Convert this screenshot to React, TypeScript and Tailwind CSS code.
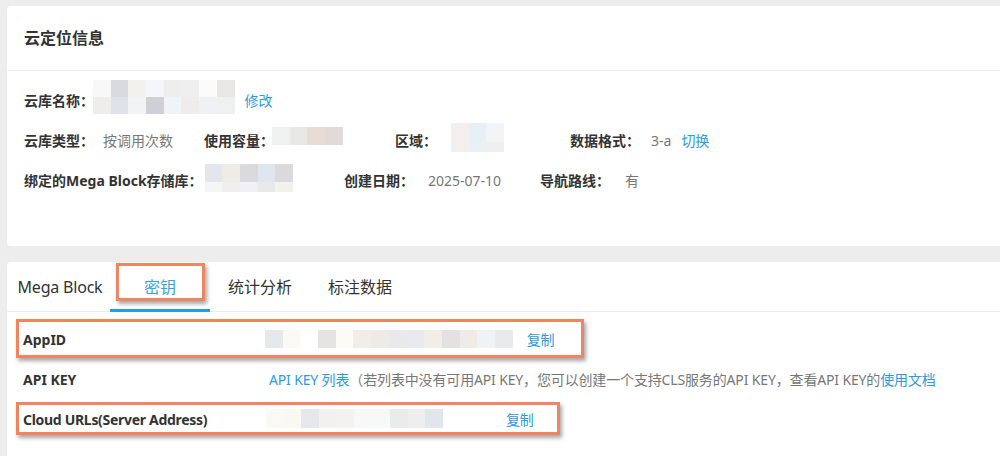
const FONT = { fontFamily: '"Noto Sans", "Noto Sans CJK SC", sans-serif' };

// blurred placeholder blocks (mosaic) standing in for hidden values
const Mosaic = ({ rows, className = '' }: { rows: { h: number; cells: string[] }[]; className?: string }) => (
  <div className={`flex flex-col shrink-0 ${className}`}>
    {rows.map((r, i) => (
      <div key={i} className="flex" style={{ height: r.h }}>
        {r.cells.map((c, j) => (
          <div key={j} className="w-[17.7px] h-full" style={{ background: c }} />
        ))}
      </div>
    ))}
  </div>
);

const Label = ({ children, className = '' }: { children: React.ReactNode; className?: string }) => (
  <span className={`text-[14px] font-bold text-[#333] whitespace-nowrap ${className}`}>{children}</span>
);

const Value = ({ children, className = '' }: { children: React.ReactNode; className?: string }) => (
  <span className={`text-[14px] text-[#777] whitespace-nowrap ${className}`}>{children}</span>
);

const Link = ({ children, className = '' }: { children: React.ReactNode; className?: string }) => (
  <span className={`text-[14px] text-[#2b9ae3] whitespace-nowrap cursor-pointer ${className}`}>{children}</span>
);

const Annot = ({ className }: { className: string }) => (
  <div className={`absolute border-[3px] border-[#f2855f] shadow-[2px_3px_4px_rgba(0,0,0,0.35)] pointer-events-none ${className}`} />
);

export default function App() {
  const tabs = ['Mega Block', '密钥', '统计分析', '标注数据'];
  const active = 1;

  return (
    <div className="w-[1000px] h-[456px] overflow-hidden bg-[#ededed] pl-[7px] pt-[6px]" style={FONT}>
      {/* 云定位信息 */}
      <div className="bg-white rounded-l-[4px] h-[240px]">
        <div className="h-[65px] flex items-center pl-[17px] border-b border-[#ececec]">
          <span className="text-[16px] font-bold text-[#333]">云定位信息</span>
        </div>
        <div className="pl-[17px] pt-[9px]">
          <div className="flex h-[40px] items-center">
            <Label>云库名称：</Label>
            <Mosaic
              className="self-start -ml-px"
              rows={[
                { h: 17, cells: ['#f8f8f9', '#d9dadf', '#f2f1ee', '#f4f7fa', '#eeeeed', '#efefef', '#fcfbf8', '#e8e7e6'] },
                { h: 17, cells: ['#efedeb', '#dfe2e8', '#f2f3f5', '#cfd0d5', '#eef4f7', '#efeceb', '#eef2f5', '#eff0f0'] },
              ]}
            />
            <Link className="ml-[10px]">修改</Link>
          </div>
          <div className="flex h-[40px] items-center">
            <div className="w-[180px] flex items-center">
              <Label>云库类型：</Label>
              <Value className="ml-[9px]">按调用次数</Value>
            </div>
            <div className="w-[191px] flex items-center">
              <Label>使用容量：</Label>
              <Mosaic className="-mt-[9px] -ml-[2px]" rows={[{ h: 18, cells: ['#eff1f0', '#e8e8e4', '#e8ddd3', '#e0dbd9'] }]} />
            </div>
            <div className="w-[175px] flex items-center">
              <Label>区域：</Label>
              <Mosaic
                className="ml-[14px] -mt-[5px]"
                rows={[
                  { h: 19, cells: ['#f4efed', '#e6f1f5', '#f1f5f8'] },
                  { h: 10, cells: ['#f3efed', '#e9f1f2', '#efefef'] },
                ]}
              />
            </div>
            <div className="flex items-center">
              <Label>数据格式：</Label>
              <Value className="ml-[11px]">3-a</Value>
              <Link className="ml-[10px]">切换</Link>
            </div>
          </div>
          <div className="flex h-[40px] items-center">
            <div className="w-[320px] flex items-center">
              <Label>绑定的Mega Block存储库：</Label>
              <Mosaic
                className="ml-[2px] -mt-[4px]"
                rows={[
                  { h: 18, cells: ['#e3e6ea', '#efece7', '#dadadd', '#e0e6ee', '#dadadb'] },
                  { h: 10, cells: ['#f4f5f5', '#f0efee', '#eff1f4', '#e9e9ea', '#f2f1ec'] },
                ]}
              />
            </div>
            <div className="w-[196px] flex items-center">
              <Label>创建日期：</Label>
              <Value className="ml-[14px]">2025-07-10</Value>
            </div>
            <div className="flex items-center">
              <Label>导航路线：</Label>
              <Value className="ml-[15px]">有</Value>
            </div>
          </div>
        </div>
      </div>

      {/* 密钥 tab card */}
      <div className="relative bg-white rounded-l-[4px] mt-[16px] h-[200px]">
        <div className="flex h-[50px] pl-[3px] border-b border-[#ececec]">
          {tabs.map((t, i) => (
            <div
              key={t}
              className={`w-[100px] flex items-center justify-center text-[16px] border-b-[3px] -mb-px pt-[2px] ${
                i === active ? 'text-[#3a9fe2] border-[#1e9fe4]' : 'text-[#333] border-transparent'
              } ${i === 0 ? 'tracking-[-0.2px]' : ''}`}
            >
              {t}
            </div>
          ))}
        </div>
        <div className="pl-[16px] pt-[7px]">
          <div className="flex h-[40px] items-center">
            <Label className="w-[242px]">AppID</Label>
            <Mosaic
              className="-mt-[1px]"
              rows={[
                {
                  h: 18,
                  cells: ['#e6e8eb', '#fbf9f3', '#ffffff', '#e5e4e3', '#fcfbf6', '#f1eeea', '#eeebe7', '#e9e8ea', '#e8eaed', '#f1eee7', '#e3e1e2', '#efece8', '#f0f3f6', '#e9eaec'],
                },
              ]}
            />
            <Link className="ml-[14px]">复制</Link>
          </div>
          <div className="flex h-[40px] items-center">
            <Label className="w-[246px]">API KEY</Label>
            <span className="text-[14px] whitespace-nowrap text-[#777] tracking-[-0.15px]">
              <Link>API KEY 列表</Link>（若列表中没有可用API KEY，您可以创建一个支持CLS服务的API KEY，查看API KEY的<Link>使用文档</Link>
            </span>
          </div>
          <div className="flex h-[40px] items-center">
            <Label className="w-[243px] tracking-[-0.3px]">Cloud URLs(Server Address)</Label>
            <Mosaic
              className="mt-[-1px]"
              rows={[
                { h: 19, cells: ['#fbf9f4', '#faf8f2', '#e4e7ec', '#f3f1ed', '#f3f2ef', '#f8f8f8', '#f7f8f8', '#ebebec', '#eeeeee', '#e1e6ee'] },
              ]}
            />
            <Link className="ml-[63px]">复制</Link>
          </div>
        </div>

        <Annot className="left-[109px] top-[1px] w-[89px] h-[38px]" />
        <Annot className="left-[9px] top-[57px] w-[568px] h-[39px]" />
        <Annot className="left-[9px] top-[140px] w-[544px] h-[33px]" />
      </div>
    </div>
  );
}
